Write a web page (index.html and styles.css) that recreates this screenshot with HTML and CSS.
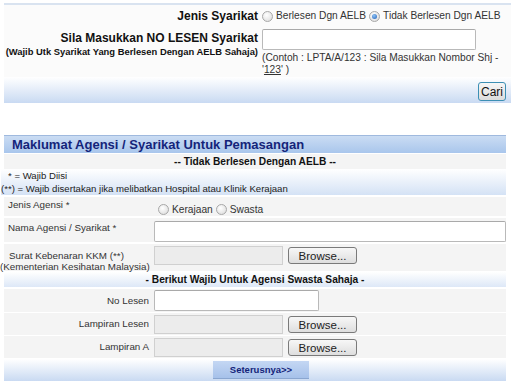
FILE: index.html
```
<!doctype html>
<html lang="ms">
  <head>
    <meta charset="UTF-8" />
    <title>Permohonan Pemasangan</title>
    <link rel="stylesheet" href="styles.css">
  </head>
  <body>
    <div class="search">
      <div class="search-row">
        <div class="search-label"><span class="big">Jenis Syarikat</span></div>
        <div class="search-field radios">
          <label><span class="radio"></span>Berlesen Dgn AELB</label>
          <label><span class="radio on"></span>Tidak Berlesen Dgn AELB</label>
        </div>
      </div>
      <div class="search-row tall">
        <div class="search-label">
          <div class="big">Sila Masukkan NO LESEN Syarikat</div>
          <div class="note">(Wajib Utk Syarikat Yang Berlesen Dengan AELB Sahaja)</div>
        </div>
        <div class="search-field">
          <input type="text" class="text lesen" />
          <div class="hint">(Contoh : LPTA/A/123 : Sila Masukkan Nombor Shj -<br />'<u>123</u>' )</div>
        </div>
      </div>
      <div class="bar bar-right">
        <button class="cari">Cari</button>
      </div>
    </div>

    <div class="form">
      <div class="form-head">Maklumat Agensi / Syarikat Untuk Pemasangan</div>
      <div class="sub">-- Tidak Berlesen Dengan AELB --</div>
      <div class="legend">
        <div class="legend-first">* = Wajib Diisi</div>
        <div>(**) = Wajib disertakan jika melibatkan Hospital atau Klinik Kerajaan</div>
      </div>

      <div class="row r-jenis">
        <div class="label">Jenis Agensi *</div>
        <div class="field radios low">
          <label><span class="radio"></span>Kerajaan</label>
          <label><span class="radio"></span>Swasta</label>
        </div>
      </div>
      <div class="row r-nama">
        <div class="label">Nama Agensi / Syarikat *</div>
        <div class="field"><input type="text" class="text full" /></div>
      </div>
      <div class="row r-surat">
        <div class="label two">
          <div class="first">Surat Kebenaran KKM (**)</div>
          <div>(Kementerian Kesihatan Malaysia)</div>
        </div>
        <div class="field file"><span class="file-box"></span><button class="browse">Browse...</button></div>
      </div>

      <div class="sub bar">- Berikut Wajib Untuk Agensi Swasta Sahaja -</div>

      <div class="row r-lesen">
        <div class="label right">No Lesen</div>
        <div class="field"><input type="text" class="text short" /></div>
      </div>
      <div class="row r-lamp">
        <div class="label right">Lampiran Lesen</div>
        <div class="field file"><span class="file-box"></span><button class="browse">Browse...</button></div>
      </div>
      <div class="row r-lamp">
        <div class="label right">Lampiran A</div>
        <div class="field file"><span class="file-box"></span><button class="browse">Browse...</button></div>
      </div>

      <div class="bar bar-center">
        <button class="next">Seterusnya&gt;&gt;</button>
      </div>
    </div>
  </body>
</html>
```

FILE: styles.css
```
body {
  margin: 0;
  padding: 3px 5px 0 4px;
  font-family: "Liberation Sans", Arial, sans-serif;
  font-size: 10px;
  line-height: 12px;
  color: #222;
  background-color: white;
}

/* top search box */
.search {
  border-top: 2px solid #d9e3f0;
}

.search-row {
  display: grid;
  grid-template-columns: 254px 1fr;
  column-gap: 4px;
  align-items: center;
  height: 22px;
  background-color: #fbfbfb;
}

.search-row.tall {
  height: 50px;
  align-items: start;
  box-sizing: border-box;
  padding-top: 2px;
}

.search-label {
  text-align: right;
  color: #111;
}

.search-label .big {
  font-weight: bold;
  font-size: 12px;
  line-height: 15px;
}

.tall .search-label {
  padding-top: 2px;
}

.search-label .note {
  font-weight: bold;
  font-size: 9.4px;
  line-height: 11px;
}

.radios {
  display: flex;
  align-items: center;
  gap: 3px;
  font-size: 10.2px;
  color: #333;
}

.radios label {
  display: flex;
  align-items: center;
  gap: 3px;
}

.radio {
  display: inline-block;
  width: 9px;
  height: 9px;
  border-radius: 50%;
  border: 1px solid #a8a8a8;
  background: radial-gradient(circle at 40% 35%, #ffffff, #d8d8d8);
  position: relative;
}

.radio.on::after {
  content: "";
  position: absolute;
  left: 2px;
  top: 2px;
  width: 5px;
  height: 5px;
  border-radius: 50%;
  background: radial-gradient(circle at 40% 35%, #8fc3f5, #1f5fb8);
}

.text {
  display: block;
  box-sizing: border-box;
  height: 21px;
  margin: 0;
  border: 1px solid #b9b9b9;
  border-top-color: #a9a9a9;
  background-color: white;
  border-radius: 2px;
}

.lesen {
  width: 214px;
}

.hint {
  margin-top: 2px;
  font-size: 10.2px;
  line-height: 12px;
  color: #333;
}

.bar {
  background: linear-gradient(#ffffff, #c9daf2);
}

.bar-right {
  display: flex;
  justify-content: flex-end;
  align-items: flex-start;
  box-sizing: border-box;
  height: 26px;
  padding: 5px 5px 0;
}

.cari {
  font-family: "Liberation Sans", Arial, sans-serif;
  font-size: 12px;
  height: 19px;
  padding: 0 2px;
  border: 1px solid #3c8fb4;
  border-radius: 3px;
  background: linear-gradient(#f6f6f6, #dcdcdc);
  color: #111;
}

/* form */
.form {
  margin-top: 32px;
  width: 502px;
}

.form-head {
  border-top: 1px solid #9fb9de;
  background: linear-gradient(#cadcf3, #a9c6ec);
  color: #14247a;
  font-weight: bold;
  font-size: 13px;
  line-height: 17px;
  height: 17px;
  padding: 0 8px;
}

.sub {
  text-align: center;
  font-weight: bold;
  font-size: 10.2px;
  line-height: 15px;
  height: 15px;
  margin-top: 1px;
  background-color: #f4f4f4;
  color: #111;
}

.sub.bar {
  background: linear-gradient(#ffffff, #dde8f7);
  margin-top: 1px;
}

.legend {
  margin-left: -3px;
  height: 26px;
  font-size: 9.6px;
  line-height: 13px;
  background: linear-gradient(#ffffff, #d4e2f5);
  color: #222;
}

.legend-first {
  padding-left: 7px;
}

.row {
  display: grid;
  grid-template-columns: 147px 1fr;
  column-gap: 3px;
  box-sizing: border-box;
  background-color: #f4f4f4;
  margin-top: 2px;
}

.r-jenis {
  height: 19px;
}

.r-nama {
  height: 24px;
  padding-top: 3px;
}

.r-surat {
  height: 27px;
  padding-top: 2px;
}

.r-lesen {
  height: 23px;
  padding-top: 1px;
}

.r-lamp {
  height: 22px;
  padding-top: 2px;
  margin-top: 1px;
}

.label {
  font-size: 9.8px;
  padding: 2px 0 0 4px;
  color: #333;
  white-space: nowrap;
}

.r-nama .label {
  padding-top: 1px;
}

.label.two {
  padding: 4px 0 0;
  margin-left: -4px;
  line-height: 11px;
}

.label.two .first {
  padding-left: 9px;
}

.label.right {
  text-align: right;
  padding: 5px 2px 0 0;
}

.r-lamp .label.right {
  padding-top: 3px;
}

.field {
  display: flex;
  align-items: flex-start;
}

.field.low {
  align-items: center;
  padding-top: 6px;
  padding-left: 4px;
}

.full {
  width: 100%;
}

.short {
  width: 165px;
}

.file {
  gap: 5px;
}

.file-box {
  display: block;
  width: 129px;
  height: 19px;
  border: 1px solid #d0d0d0;
  background-color: #ececec;
  box-sizing: border-box;
}

.browse {
  font-family: "Liberation Sans", Arial, sans-serif;
  font-size: 11.5px;
  height: 17px;
  width: 69px;
  margin-top: 1px;
  padding: 0;
  border: 1px solid #7a7a7a;
  border-radius: 3px;
  background: linear-gradient(#f7f7f7, #dedede);
  color: #222;
}

.bar-center {
  display: flex;
  justify-content: center;
  align-items: flex-start;
  box-sizing: border-box;
  height: 22px;
  margin-top: 1px;
  padding-top: 2px;
}

.next {
  font-family: "Liberation Sans", Arial, sans-serif;
  font-weight: bold;
  font-size: 9.5px;
  color: #14247a;
  width: 96px;
  height: 18px;
  padding: 0;
  border: none;
  border-bottom: 1px solid #8aa6d0;
  background: linear-gradient(#c4d7f3, #a6c1ea);
  margin-left: 12px;
}
```
